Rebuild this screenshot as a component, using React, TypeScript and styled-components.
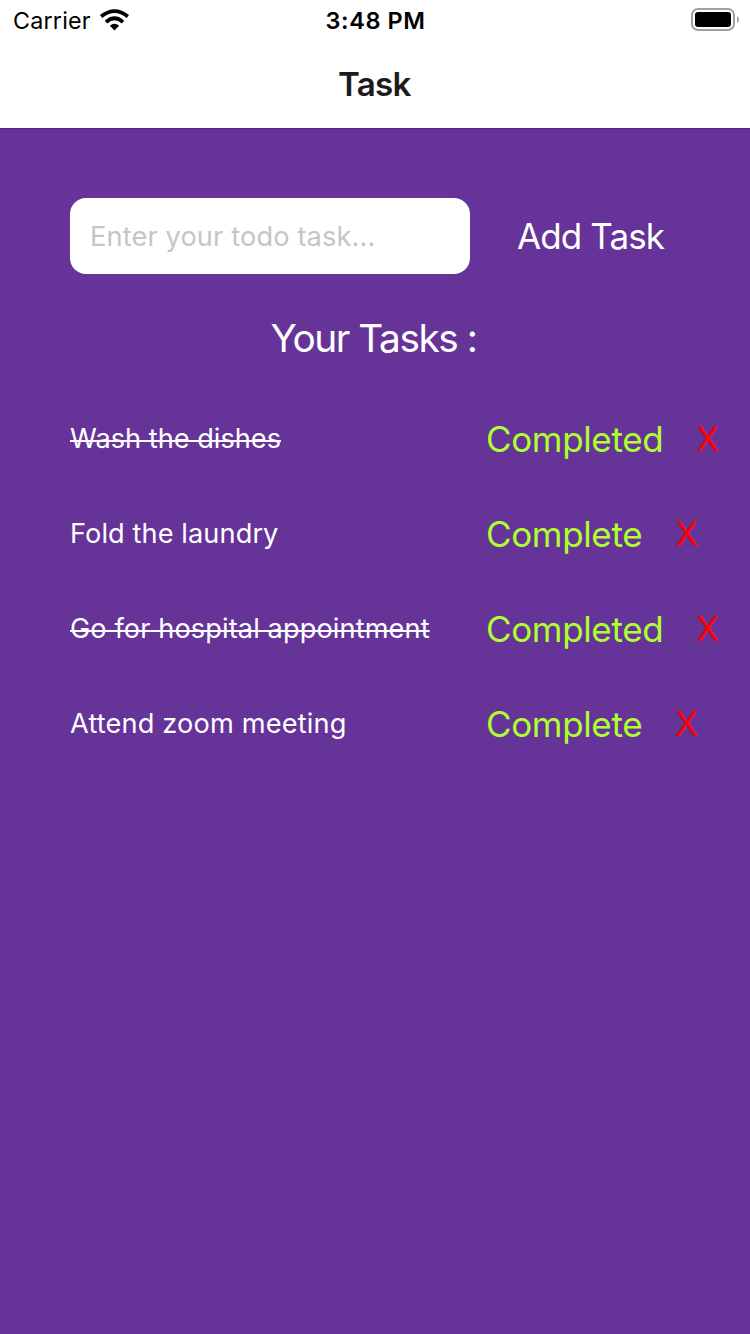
import React from "react";
import styled, { createGlobalStyle } from "styled-components";

const Global = createGlobalStyle`
  * { box-sizing: border-box; }
  body { margin: 0; background: #663399; font-family: Inter, "Liberation Sans", sans-serif; }
`;
const Screen = styled.div`
  width: 750px; height: 1334px; background: #663399; display: flex; flex-direction: column;
`;
const Header = styled.header`
  height: 129px; background: #fff; border-bottom: 1px solid #4d2a77; display: flex; flex-direction: column;
`;
const StatusBar = styled.div`
  height: 40px; display: grid; grid-template-columns: 1fr auto 1fr; align-items: center; padding: 0 11px 0 13px; color: #000;
`;
const Carrier = styled.div`
  display: flex; align-items: center; gap: 9px; padding-top: 1px;
`;
const Wifi = styled.svg`
  display: block; margin-bottom: 2px;
`;
const Label = styled.span<{ $w: number; $size: number; $spacing?: number; $weight?: number; $color?: string; $strike?: boolean }>`
  display: block; flex: none; width: ${p => p.$w}px; white-space: nowrap;
  font-size: ${p => p.$size}px; font-weight: ${p => p.$weight ?? 400}; color: ${p => p.$color ?? "inherit"};
  letter-spacing: ${p => p.$spacing ?? 0}px;
  text-decoration: ${p => (p.$strike ? "underline 2px" : "none")};
  text-underline-offset: -8px; text-decoration-skip-ink: none;
`;
const Clock = styled.div`
  padding-top: 1px;
`;
const Battery = styled.svg`
  justify-self: end; display: block;
`;
const Title = styled.h1`
  margin: 0; flex: 1; display: flex; align-items: center; justify-content: center; padding: 0 2px 1px 0; color: #1c1c1e;
`;
const Form = styled.div`
  display: flex; align-items: center; margin: 69px 0 0 70px; height: 76px; color: #fff;
`;
const Field = styled.div`
  width: 400px; height: 76px; border-radius: 16px; background: #fff; color: #c5c5c7;
  display: flex; align-items: center; padding: 1px 0 0 20px; margin-right: 47px;
`;
const Heading = styled.h2`
  margin: 33px 0 0; height: 60px; display: flex; align-items: center; justify-content: center; padding-right: 2px; color: #fff;
`;
const List = styled.ul`
  list-style: none; margin: 24px 0 0; padding: 0;
`;
const Row = styled.li`
  height: 95px; display: flex; align-items: center; padding-left: 70px; color: #fff;
`;
const Name = styled.div`
  width: 416px; padding-bottom: 1px;
`;
const Remove = styled.div`
  margin-left: 33px;
`;

const tasks = [
  { name: "Wash the dishes", done: true, w: 211, spacing: 0 },
  { name: "Fold the laundry", done: false, w: 209, spacing: 0.08 },
  { name: "Go for hospital appointment", done: true, w: 360, spacing: 0.09 },
  { name: "Attend zoom meeting", done: false, w: 277, spacing: 0.15 },
];

export default function App() {
  return (
    <Screen>
      <Global />
      <Header>
        <StatusBar>
          <Carrier>
            <Label $w={78} $size={23.3} $spacing={0.2}>Carrier</Label>
            <Wifi width="29" height="22" viewBox="0 0 30 22">
              <path d="M1.2 7.4Q15-3.6 28.8 7.4" fill="none" stroke="#000" strokeWidth="3.8" />
              <path d="M6.2 13.1Q15 5.3 23.8 13.1" fill="none" stroke="#000" strokeWidth="3.8" />
              <path d="M10.2 17Q15 13 19.8 17L15 21.8Z" />
            </Wifi>
          </Carrier>
          <Clock><Label $w={101} $size={23.5} $spacing={0.6} $weight={570}>3:48 PM</Label></Clock>
          <Battery width="49" height="24" viewBox="0 0 49 24">
            <rect x="2" y="1" width="42" height="21" rx="6" fill="none" stroke="#a0a0a0" strokeWidth="2" />
            <rect x="5" y="4" width="36" height="15" rx="3" />
            <path d="M47 8Q49 9 49 11.5T47 15Z" fill="#a0a0a0" />
          </Battery>
        </StatusBar>
        <Title><Label $w={72} $size={33.2} $spacing={-0.75} $weight={600}>Task</Label></Title>
      </Header>
      <Form>
        <Field><Label $w={286} $size={27.2} $spacing={0.13}>Enter your todo task...</Label></Field>
        <Label $w={147} $size={35} $spacing={-0.9}>Add Task</Label>
      </Form>
      <Heading><Label $w={207} $size={38.8} $spacing={-1.45}>Your Tasks :</Label></Heading>
      <List>
        {tasks.map(t => (
          <Row key={t.name}>
            <Name><Label $w={t.w} $size={27.2} $spacing={t.spacing} $strike={t.done}>{t.name}</Label></Name>
            <Label $w={t.done ? 177 : 156} $size={35} $spacing={-0.35} $color="#adff2f">{t.done ? "Completed" : "Complete"}</Label>
            <Remove><Label $w={23} $size={34.4} $color="#ff0000">X</Label></Remove>
          </Row>
        ))}
      </List>
    </Screen>
  );
}
